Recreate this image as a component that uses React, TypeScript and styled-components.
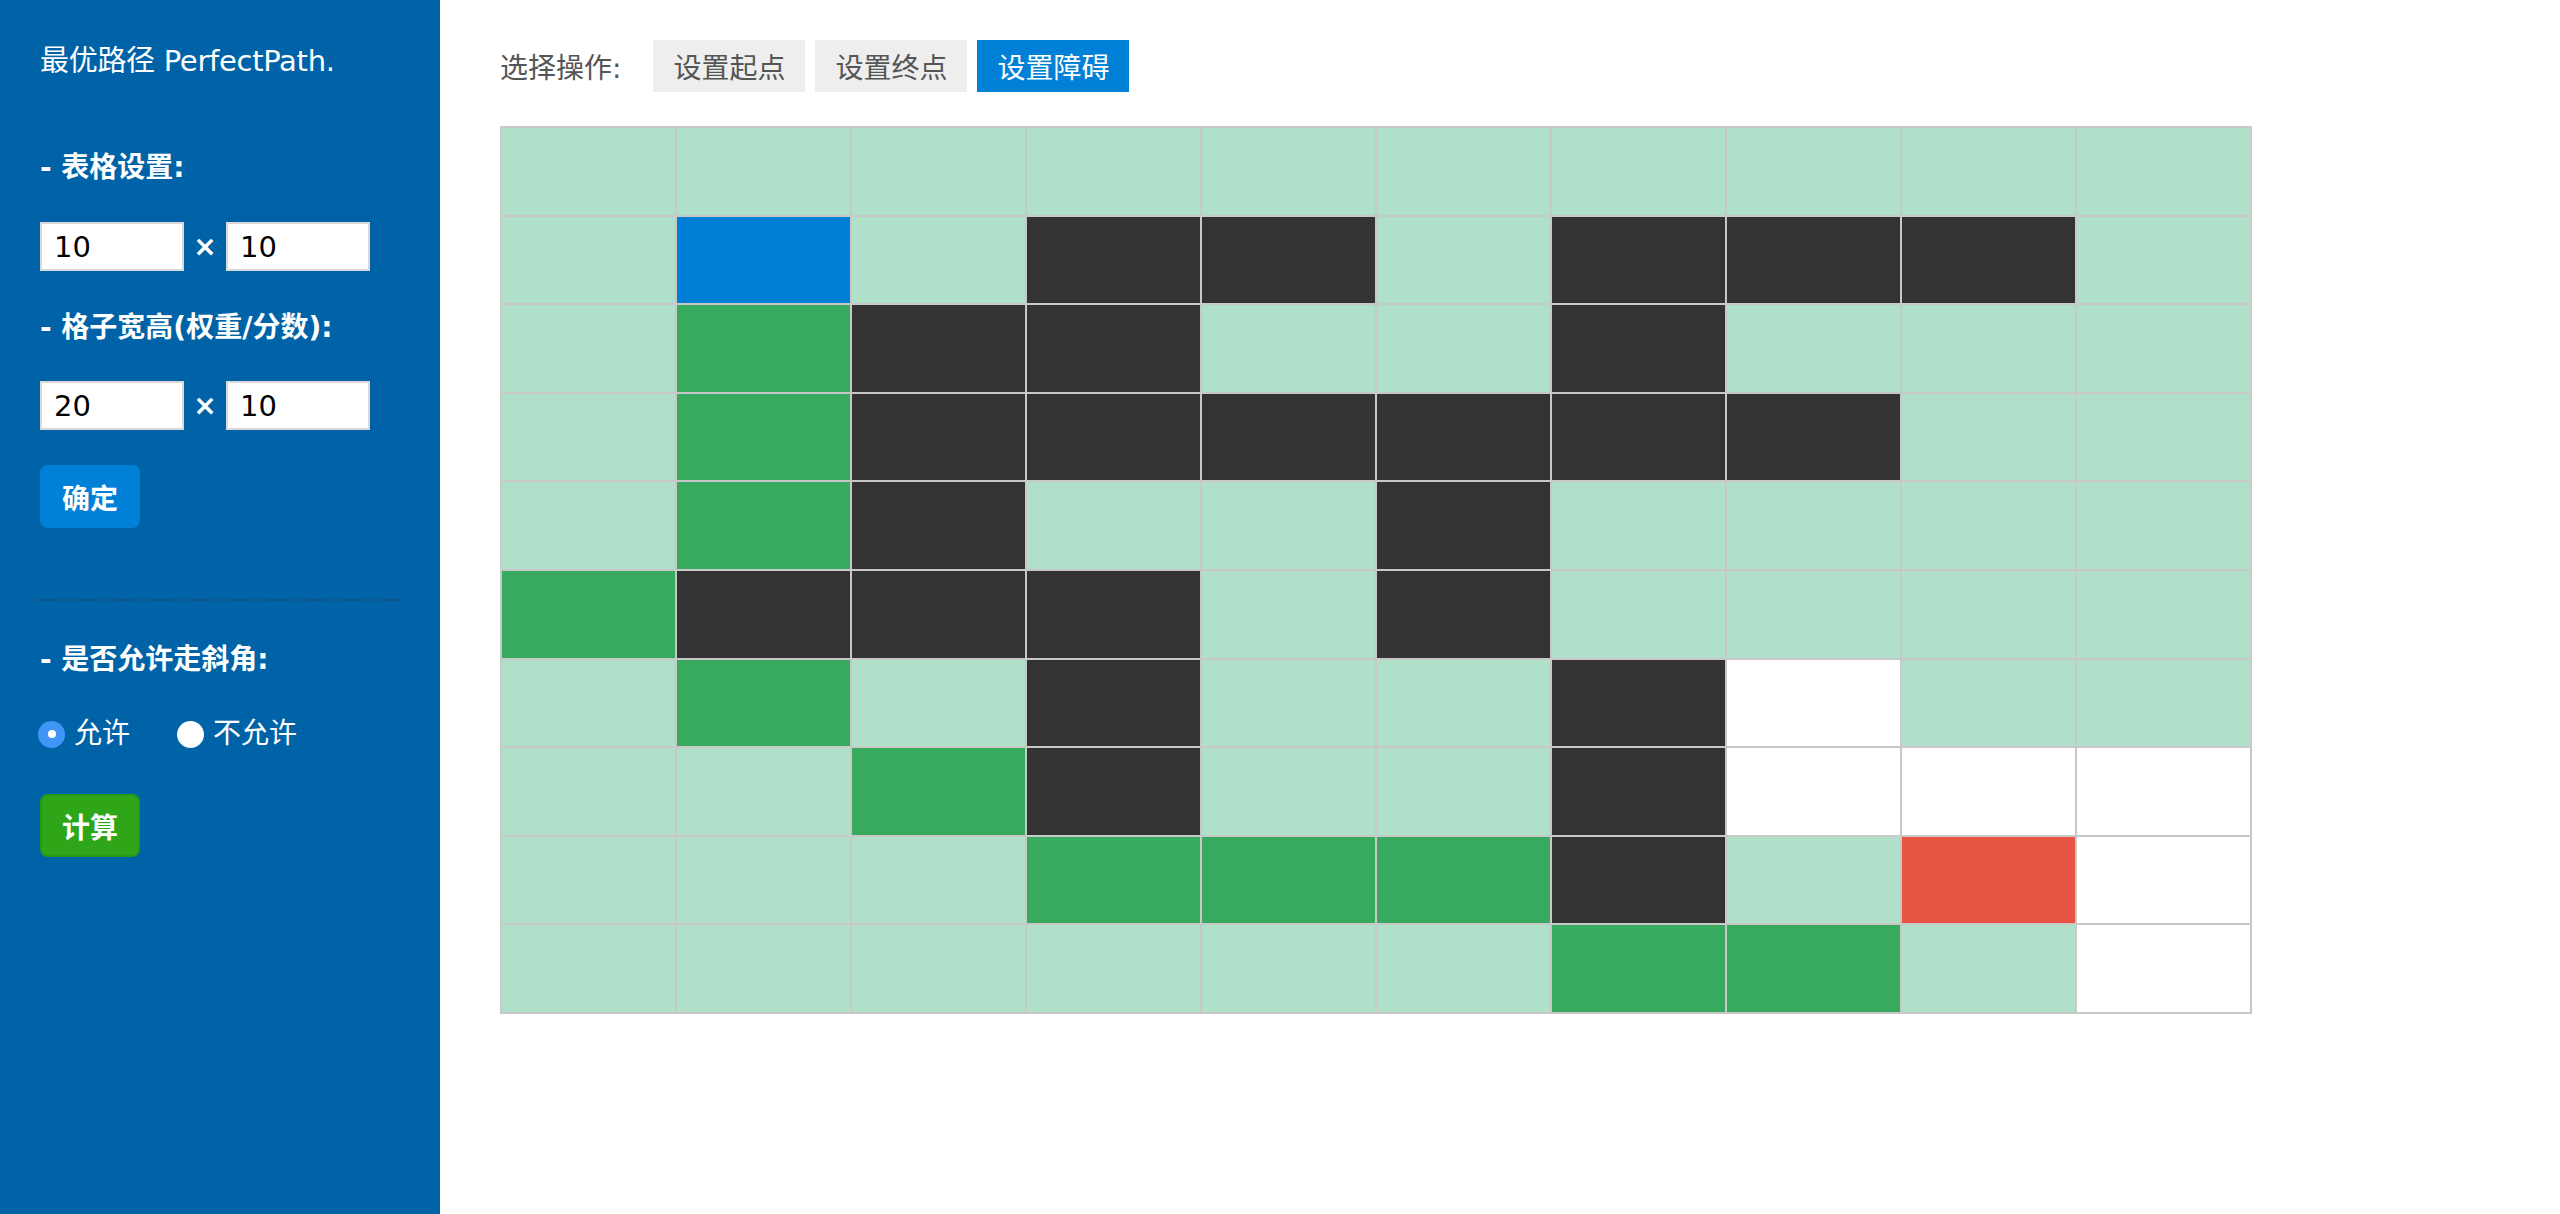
import React, { FC, useState } from "react";
import styled, { createGlobalStyle, css } from "styled-components";

type CellKind = "L" | "G" | "D" | "B" | "R" | "W";

const GRID: string[] = [
    "LLLLLLLLLL",
    "LBLDDLDDDL",
    "LGDDLLDLLL",
    "LGDDDDDDLL",
    "LGDLLDLLLL",
    "GDDDLDLLLL",
    "LGLDLLDWLL",
    "LLGDLLDWWW",
    "LLLGGGDLRW",
    "LLLLLLGGLW",
];

const cellColors: Record<CellKind, string> = {
    L: "#b0dfca",
    G: "#37aa5e",
    D: "#333333",
    B: "#007fd6",
    R: "#e75443",
    W: "#ffffff",
};

const tabs = ["设置起点", "设置终点", "设置障碍"];

const App: FC = () => {
    const [activeTab, setActiveTab] = useState(2);
    const [diagonal, setDiagonal] = useState(true);
    const [rows, setRows] = useState("10");
    const [cols, setCols] = useState("10");
    const [cellW, setCellW] = useState("20");
    const [cellH, setCellH] = useState("10");

    return (
        <>
            <GlobalStyle />
            <Layout>
                <Sidebar>
                    <Title>最优路径 PerfectPath.</Title>
                    <SectionLabel $top={67}>- 表格设置:</SectionLabel>
                    <InputRow $top={34}>
                        <SizeInput value={rows} onChange={e => setRows(e.target.value)} />
                        <Times>×</Times>
                        <SizeInput value={cols} onChange={e => setCols(e.target.value)} />
                    </InputRow>
                    <SectionLabel $top={37}>- 格子宽高(权重/分数):</SectionLabel>
                    <InputRow $top={33}>
                        <SizeInput value={cellW} onChange={e => setCellW(e.target.value)} />
                        <Times>×</Times>
                        <SizeInput value={cellH} onChange={e => setCellH(e.target.value)} />
                    </InputRow>
                    <ActionButton $variant="blue" $top={35}>确定</ActionButton>
                    <Divider />
                    <SectionLabel $top={39}>- 是否允许走斜角:</SectionLabel>
                    <RadioRow>
                        <RadioLabel onClick={() => setDiagonal(true)}>
                            <RadioDot $checked={diagonal} />
                            允许
                        </RadioLabel>
                        <RadioLabel onClick={() => setDiagonal(false)}>
                            <RadioDot $checked={!diagonal} />
                            不允许
                        </RadioLabel>
                    </RadioRow>
                    <ActionButton $variant="green" $top={40}>计算</ActionButton>
                </Sidebar>
                <Main>
                    <Toolbar>
                        <ToolLabel>选择操作:</ToolLabel>
                        {tabs.map((t, i) => (
                            <TabButton key={t} $active={i === activeTab} onClick={() => setActiveTab(i)}>
                                {t}
                            </TabButton>
                        ))}
                    </Toolbar>
                    <Board>
                        {GRID.map((row, r) =>
                            row.split("").map((k, c) => (
                                <Cell key={`${r}-${c}`} $kind={k as CellKind} />
                            ))
                        )}
                    </Board>
                </Main>
            </Layout>
        </>
    );
};

export default App;

const GlobalStyle = createGlobalStyle`
    html, body {
        margin: 0;
        padding: 0;
        background: #fff;
    }
    body {
        font-family: "DejaVu Sans", "Noto Sans CJK SC", sans-serif;
        font-size: 28px;
    }
    * {
        box-sizing: border-box;
    }
`;

const Layout = styled.div`
    display: flex;
    min-height: 1214px;
`;

const Sidebar = styled.aside`
    width: 440px;
    flex-shrink: 0;
    background: #0063a7;
    color: #fff;
    padding: 41px 40px;
    display: flex;
    flex-direction: column;
    align-items: flex-start;
`;

const Title = styled.div`
    font-size: 29px;
    line-height: 40px;
    letter-spacing: -0.3px;
`;

const SectionLabel = styled.div<{ $top: number }>`
    margin-top: ${p => p.$top}px;
    font-size: 28px;
    line-height: 40px;
    font-weight: bold;
`;

const InputRow = styled.div<{ $top: number }>`
    margin-top: ${p => p.$top}px;
    display: flex;
    align-items: center;
`;

const SizeInput = styled.input`
    width: 144px;
    height: 49px;
    border: 2px solid #d9d9d9;
    background: #fff;
    padding: 0 12px;
    font-family: "DejaVu Sans", sans-serif;
    font-size: 29px;
    color: #000;
    outline: none;
`;

const Times = styled.span`
    width: 42px;
    text-align: center;
    font-size: 28px;
    font-weight: bold;
`;

const ActionButton = styled.button<{ $variant: "blue" | "green"; $top: number }>`
    margin-top: ${p => p.$top}px;
    width: 100px;
    height: 63px;
    border-radius: 8px;
    color: #fff;
    font-family: "DejaVu Sans", "Noto Sans CJK SC", sans-serif;
    font-size: 28px;
    font-weight: bold;
    cursor: pointer;
    ${p => p.$variant === "blue"
        ? css`
            background: #0080d6;
            border: none;
        `
        : css`
            background: #2ea617;
            border: 2px solid #2a9a16;
        `}
`;

const Divider = styled.hr`
    margin: 71px 0 0;
    width: 360px;
    border: none;
    border-top: 2px dashed #1a4d7c;
`;

const RadioRow = styled.div`
    margin-top: 34px;
    display: flex;
    align-items: center;
    gap: 49px;
    line-height: 40px;
`;

const RadioLabel = styled.label`
    display: flex;
    align-items: center;
    gap: 9px;
    cursor: pointer;
    margin-left: -2px;
`;

const RadioDot = styled.span<{ $checked: boolean }>`
    width: 27px;
    height: 27px;
    border-radius: 50%;
    display: inline-flex;
    align-items: center;
    justify-content: center;
    ${p => p.$checked
        ? css`
            background: #3f96f6;
            &::after {
                content: "";
                width: 8px;
                height: 8px;
                border-radius: 50%;
                background: #fff;
            }
        `
        : css`
            background: radial-gradient(circle at 50% 40%, #ffffff 60%, #e6e6e6 100%);
        `}
`;

const Main = styled.main`
    flex: 1;
    padding: 40px 0 0 60px;
`;

const Toolbar = styled.div`
    display: flex;
    align-items: center;
    gap: 10px;
`;

const ToolLabel = styled.span`
    color: #555;
    font-size: 28px;
    margin-right: 22px;
`;

const TabButton = styled.button<{ $active: boolean }>`
    width: 152px;
    height: 52px;
    border: none;
    font-family: "DejaVu Sans", "Noto Sans CJK SC", sans-serif;
    font-size: 28px;
    cursor: pointer;
    background: ${p => (p.$active ? "#0080d6" : "#eeeeee")};
    color: ${p => (p.$active ? "#fff" : "#555")};
`;

const Board = styled.div`
    margin-top: 34px;
    width: 1752px;
    height: 888px;
    display: grid;
    grid-template-columns: repeat(10, 1fr);
    grid-template-rows: repeat(10, 1fr);
    gap: 2px;
    padding: 2px;
    background: #c8c8c8;
`;

const Cell = styled.div<{ $kind: CellKind }>`
    background: ${p => cellColors[p.$kind]};
`;
